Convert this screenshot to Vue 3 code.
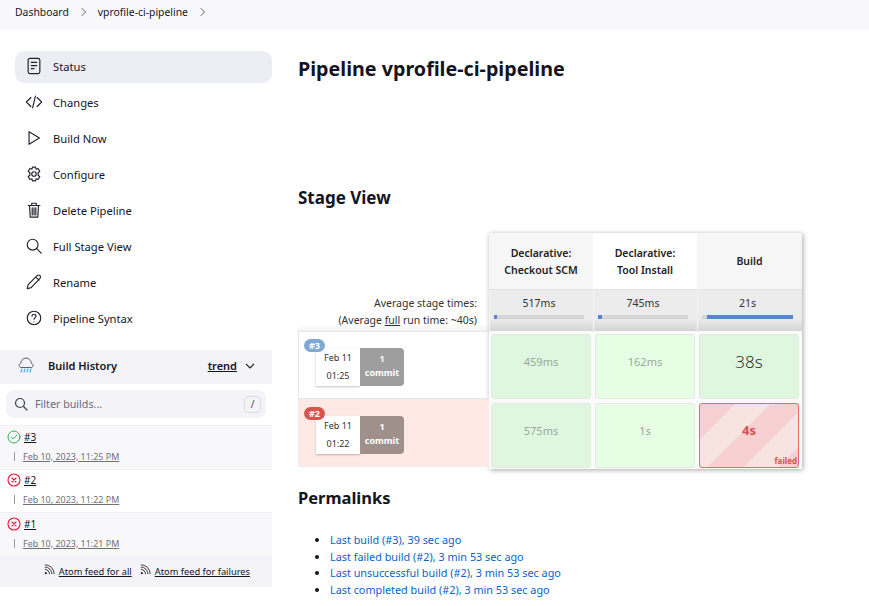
<script setup>
const navItems = [
  { label: 'Status', icon: 'status', active: true },
  { label: 'Changes', icon: 'changes' },
  { label: 'Build Now', icon: 'play' },
  { label: 'Configure', icon: 'gear' },
  { label: 'Delete Pipeline', icon: 'trash' },
  { label: 'Full Stage View', icon: 'search' },
  { label: 'Rename', icon: 'pencil' },
  { label: 'Pipeline Syntax', icon: 'help' }
]

const builds = [
  { id: '#3', date: 'Feb 10, 2023, 11:25 PM', ok: true },
  { id: '#2', date: 'Feb 10, 2023, 11:22 PM', ok: false },
  { id: '#1', date: 'Feb 10, 2023, 11:21 PM', ok: false }
]

const stages = [
  { name: ['Declarative:', 'Checkout SCM'], avg: '517ms', from: 0, width: 3 },
  { name: ['Declarative:', 'Tool Install'], avg: '745ms', from: 0, width: 4, light: true },
  { name: ['Build'], avg: '21s', from: 6, width: 94 }
]

const rows = [
  {
    id: '#3', date: 'Feb 11', time: '01:25', failed: false,
    cells: [
      { text: '459ms', cls: 'ok' },
      { text: '162ms', cls: 'ok light' },
      { text: '38s', cls: 'ok big' }
    ]
  },
  {
    id: '#2', date: 'Feb 11', time: '01:22', failed: true,
    cells: [
      { text: '575ms', cls: 'ok' },
      { text: '1s', cls: 'ok light' },
      { text: '4s', cls: 'fail', note: 'failed' }
    ]
  }
]

const permalinks = [
  'Last build (#3), 39 sec ago',
  'Last failed build (#2), 3 min 53 sec ago',
  'Last unsuccessful build (#2), 3 min 53 sec ago',
  'Last completed build (#2), 3 min 53 sec ago'
]
</script>

<template>
  <div class="page">
    <header class="crumbs">
      <span>Dashboard</span>
      <i class="chev"></i>
      <span>vprofile-ci-pipeline</span>
      <i class="chev"></i>
    </header>

    <div class="layout">
      <aside class="side">
        <nav class="nav">
          <div v-for="item in navItems" :key="item.label" class="nav-item" :class="{ active: item.active }">
            <svg class="nav-icon" viewBox="0 0 20 20" fill="none" stroke="#1f2330" stroke-width="1.3" stroke-linecap="round" stroke-linejoin="round">
              <template v-if="item.icon === 'status'">
                <rect x="3.500" y="1.500" width="13" height="17" rx="2" />
                <path d="M7 6h6M7 9.500h6M7 13h3" />
              </template>
              <path v-else-if="item.icon === 'changes'" d="M6.5 5 1.5 10l5 5M13.500 5l5 5-5 5M11.500 3.500l-3 13" />
              <path v-else-if="item.icon === 'play'" d="M4.500 3v14L16 10z" />
              <template v-else-if="item.icon === 'gear'">
                <circle cx="10" cy="10" r="2.500" />
                <path d="M8.300 2.300h3.400l.6 2.400 2.300-.8 1.800 3-1.800 1.700v2.800l1.800 1.700-1.800 3-2.300-.8-.6 2.400H8.300l-.6-2.400-2.300.8-1.800-3 1.800-1.700V8.600L3.600 6.900l1.800-3 2.300.8z" />
              </template>
              <path v-else-if="item.icon === 'trash'" d="M3.500 5h13M7.500 5V2.500h5V5M5 5l.8 13h8.400L15 5M8 7.500V15.500M10 7.500V15.500M12 7.500V15.500" />
              <template v-else-if="item.icon === 'search'">
                <circle cx="8.500" cy="8.500" r="6" />
                <path d="m13 13 5 5" />
              </template>
              <path v-else-if="item.icon === 'pencil'" d="m2.500 17.500 1-4.500L13.500 3c1-1 2.300-1 3.200 0 .8.900.8 2.200-.2 3.200L6.800 16.300zM12 4.500l3.500 3.500" />
              <template v-else>
                <circle cx="10" cy="10" r="7.500" />
                <path d="M7.800 8c0-1.300 1-2.200 2.200-2.200s2.200.9 2.200 2c0 1.700-2.200 1.800-2.200 3.600M10 14.200v.1" />
              </template>
            </svg>
            <span>{{ item.label }}</span>
          </div>
        </nav>

        <div class="history-head">
          <svg class="cloud" viewBox="0 0 20 20" fill="none" stroke-linecap="round">
            <path d="M5 12.500h10c2.500 0 2.800-3.500.5-4C15 5.500 13 3 10 3S5.200 5.500 4.700 8.500c-2.400.5-2 4 .3 4z" stroke="#5b6475" stroke-width="1" />
            <path d="m6 14-1 3M9 14l-1 3M12 14l-1 3M15 14l-1 3" stroke="#3fa7ea" stroke-width="1.100" />
          </svg>
          <b>Build History</b>
          <span class="trend">trend</span>
          <svg class="caret" viewBox="0 0 10 6" fill="none" stroke="#1f2330" stroke-width="1.100"><path d="m1 1 4 4 4-4" /></svg>
        </div>

        <div class="filter">
          <svg class="filter-icon" viewBox="0 0 14 14" fill="none" stroke="#3d4254" stroke-width="1.200" stroke-linecap="round"><circle cx="6" cy="6" r="4.500" /><path d="m9.500 9.500 3.500 3.500" /></svg>
          <span class="filter-text">Filter builds...</span>
          <kbd class="slash">/</kbd>
        </div>

        <div class="builds">
          <div v-for="b in builds" :key="b.id" class="build">
            <div class="build-top">
              <svg v-if="b.ok" class="state" viewBox="0 0 14 14" fill="none" stroke="#2fb35a" stroke-width="1" stroke-linecap="round"><circle cx="7" cy="7" r="6" /><path d="m4.500 7.200 1.800 1.800 3.300-3.600" /></svg>
              <svg v-else class="state" viewBox="0 0 14 14" fill="none" stroke="#e6143c" stroke-width="1.100" stroke-linecap="round"><circle cx="7" cy="7" r="6" /><path d="m5 5 4 4M9 5 5 9" /></svg>
              <a class="build-id">{{ b.id }}</a>
            </div>
            <div class="build-date"><i class="tick"></i><a>{{ b.date }}</a></div>
          </div>
        </div>

        <div class="feeds">
          <svg class="rss" viewBox="0 0 12 12" fill="none" stroke="#1f2330" stroke-width="1"><circle cx="2" cy="10" r="1.200" fill="#1f2330" stroke="none" /><path d="M1 6c2.800 0 5 2.200 5 5M1 3.500c4.300 0 7.500 3.200 7.500 7.500M1 1c5.700 0 10 4.300 10 10" /></svg>
          <a>Atom feed for all</a>
          <svg class="rss second" viewBox="0 0 12 12" fill="none" stroke="#1f2330" stroke-width="1"><circle cx="2" cy="10" r="1.200" fill="#1f2330" stroke="none" /><path d="M1 6c2.800 0 5 2.200 5 5M1 3.500c4.300 0 7.500 3.200 7.500 7.500M1 1c5.700 0 10 4.300 10 10" /></svg>
          <a>Atom feed for failures</a>
        </div>
      </aside>

      <main class="main">
        <h1>Pipeline vprofile-ci-pipeline</h1>
        <h2 class="stage-title">Stage View</h2>

        <div class="stage-view">
          <div class="labels">
            <div class="avg-label">
              <div>Average stage times:</div>
              <div>(Average <u>full</u> run time: ~40s)</div>
            </div>
            <div v-for="row in rows" :key="row.id" class="run" :class="{ failed: row.failed }">
              <span class="badge">{{ row.id }}</span>
              <div class="when">
                <div>{{ row.date }}</div>
                <div>{{ row.time }}</div>
              </div>
              <div class="commit"><b>1</b><b>commit</b></div>
            </div>
          </div>

          <div class="matrix">
            <div v-for="s in stages" :key="s.avg" class="head" :class="{ white: s.light }">
              <div v-for="line in s.name" :key="line">{{ line }}</div>
            </div>
            <div v-for="s in stages" :key="s.avg + 'a'" class="avg">
              <div>{{ s.avg }}</div>
              <div class="bar">
                <span :style="{ marginLeft: s.from + '%', width: s.width + '%' }"></span>
              </div>
            </div>
            <template v-for="row in rows" :key="row.id">
              <div v-for="c in row.cells" :key="c.text" class="slot">
                <div class="cell" :class="c.cls">
                  {{ c.text }}
                  <span v-if="c.note" class="note">{{ c.note }}</span>
                </div>
              </div>
            </template>
          </div>
        </div>

        <h2 class="perma-title">Permalinks</h2>
        <ul class="perma">
          <li v-for="p in permalinks" :key="p"><a>{{ p }}</a></li>
        </ul>
      </main>
    </div>
  </div>
</template>

<style>
html, body {
  margin: 0;
  background: #fff;
}
</style>

<style scoped>
.page {
  width: 869px;
  height: 606px;
  overflow: hidden;
  font-family: "Noto Sans", "Open Sans", sans-serif;
  color: #14141f;
  font-size: 12px;
}

.crumbs {
  height: 30px;
  padding: 0 0 6px 15px;
  box-sizing: border-box;
  background: #f8f8fa;
  display: flex;
  align-items: center;
  font-size: 10.400px;
}
.chev {
  width: 5px;
  height: 5px;
  border-top: 1px solid #8f909a;
  border-right: 1px solid #8f909a;
  transform: rotate(45deg);
  margin: 0 13px 0 10px;
}

.layout {
  display: flex;
}
.side {
  width: 272px;
  flex: none;
  padding-top: 21px;
}
.nav {
  padding-left: 15px;
}
.nav-item {
  height: 32px;
  box-sizing: border-box;
  padding: 0 0 2px 10px;
  margin-bottom: 4px;
  border-radius: 9px;
  display: flex;
  align-items: center;
  gap: 10px;
  font-size: 11.200px;
}
.nav-item.active {
  background: #edeef4;
}
.nav-icon {
  width: 18px;
  height: 18px;
  flex: none;
}

.history-head {
  margin-top: 15px;
  height: 34px;
  box-sizing: border-box;
  padding: 0 0 4px 16px;
  background: #f3f3f8;
  display: flex;
  align-items: center;
  font-size: 11px;
}
.cloud {
  width: 20px;
  height: 20px;
  margin-right: 12px;
}
.history-head b {
  font-weight: 600;
}
.trend {
  margin-left: auto;
  font-weight: 600;
  text-decoration: underline;
}
.caret {
  width: 10px;
  height: 6px;
  margin: 2px 17px 0 8px;
}

.filter {
  margin: 6px 6px 0;
  height: 28px;
  border-radius: 8px;
  background: #f3f3f8;
  display: flex;
  align-items: center;
  padding-left: 8px;
}
.filter-icon {
  width: 14px;
  height: 14px;
  margin-right: 7px;
}
.filter-text {
  color: #6a6c85;
  font-size: 10.700px;
}
.slash {
  margin-left: auto;
  margin-right: 5px;
  width: 17px;
  height: 17px;
  box-sizing: border-box;
  border: 1px solid #dcdce6;
  border-radius: 4px;
  text-align: center;
  line-height: 15px;
  font-family: inherit;
  font-size: 10px;
  color: #4a4c60;
}

.builds {
  margin-top: 7px;
}
.build {
  height: 43.500px;
  padding-left: 7px;
  box-sizing: border-box;
  border-top: 1px solid #f1f1f5;
}
.build:nth-child(odd) {
  background: #f8f8fa;
}
.build-top {
  display: flex;
  align-items: center;
  height: 21px;
  gap: 3px;
  font-size: 10px;
}
.state {
  width: 14px;
  height: 14px;
}
.build-id {
  text-decoration: underline;
  color: #14141f;
}
.build-date {
  display: flex;
  align-items: center;
  font-size: 8.950px;
  color: #6f7177;
  height: 18px;
  padding-left: 7px;
}
.build-date a {
  text-decoration: underline;
}
.tick {
  width: 1px;
  height: 9px;
  background: #8c98a4;
  margin-right: 8px;
}

.feeds {
  height: 31px;
  background: #f3f3f8;
  display: flex;
  align-items: center;
  justify-content: flex-end;
  padding-right: 22px;
  font-size: 9.300px;
}
.feeds a {
  text-decoration: underline;
  white-space: nowrap;
}
.rss {
  width: 11px;
  height: 11px;
  margin: 0 4px 4px 0;
}
.rss.second {
  margin-left: 8px;
}

.main {
  padding-left: 26px;
  flex: 1;
}
h1,
h2 {
  margin: 0;
  font-weight: 700;
}
h1 {
  font-size: 19.700px;
  line-height: 26px;
  margin-top: 26px;
}
.stage-title,
.perma-title {
  font-size: 16.500px;
  line-height: 24px;
}
.stage-title {
  font-size: 17px;
  margin-top: 104px;
}

.stage-view {
  display: flex;
  align-items: flex-start;
  margin-top: 23px;
}
.labels {
  width: 191px;
  flex: none;
  padding-top: 57px;
}
.avg-label {
  height: 41px;
  box-sizing: border-box;
  padding: 5px 12px 0 0;
  text-align: right;
  font-size: 10.500px;
  line-height: 17px;
  color: #333;
  background: linear-gradient(#fff 85%, #f2f2f2);
}
.run {
  position: relative;
  height: 68px;
  box-sizing: border-box;
  border: 1px solid #e6e6e6;
  border-right: 0;
  display: flex;
  padding: 16px 0 0 17px;
}
.run.failed {
  background: #ffe9e5;
  border-color: #eee;
}
.badge {
  position: absolute;
  left: 5px;
  top: 7px;
  height: 13px;
  padding: 0 5px;
  border-radius: 7px;
  background: #80a8d4;
  color: #fff;
  font-size: 9px;
  font-weight: 700;
  line-height: 13px;
}
.failed .badge {
  background: #d9534f;
}
.when {
  width: 44px;
  height: 38px;
  box-sizing: border-box;
  padding-top: 1px;
  background: #fff;
  box-shadow: 0 1px 2px rgba(0, 0, 0, 0.25);
  text-align: center;
  font-size: 9px;
  line-height: 18px;
  color: #333;
}
.commit {
  width: 44px;
  height: 38px;
  box-sizing: border-box;
  padding-bottom: 2px;
  background: #9e9e9e;
  border-radius: 0 4px 4px 0;
  color: #fff;
  display: flex;
  flex-direction: column;
  align-items: center;
  justify-content: center;
  font-size: 9px;
  line-height: 14px;
}
.failed .commit {
  background: #a0908c;
}

.matrix {
  display: grid;
  grid-template-columns: 104px 104px 105px;
  grid-template-rows: 57px 41px 69px 69px;
  box-shadow: 1px 1px 5px rgba(0, 0, 0, 0.35);
}
.head {
  background: #f6f6f6;
  display: flex;
  flex-direction: column;
  align-items: center;
  justify-content: center;
  padding-top: 1px;
  border-bottom: 1px solid #e4e4e4;
  font-size: 10.500px;
  font-weight: 600;
  line-height: 17px;
  color: #222;
}
.head.white {
  background: #fff;
}
.avg {
  background: linear-gradient(#ececec 70%, #d4d4d4);
  padding: 6px 9px 0 4px;
  text-align: center;
  font-size: 10.500px;
  line-height: 14px;
  color: #333;
  border-left: 1px solid #f5f5f5;
}
.bar {
  height: 3px;
  margin-top: 5px;
  background: #d6d6d6;
  border: 1px solid #cfcfcf;
  border-width: 0 0 1px;
  display: flex;
}
.bar span {
  background: #5586d0;
  min-width: 3px;
  height: 4px;
}
.slot {
  padding: 3px 2px 1px;
  background: #fbfbfb;
  display: flex;
}
.slot:nth-child(3n) {
  padding-right: 3px;
}
.cell {
  position: relative;
  flex: 1;
  box-sizing: border-box;
  border: 1px solid #e3e9e1;
  border-radius: 3px;
  background: #dff7de;
  display: flex;
  align-items: center;
  justify-content: center;
  padding-bottom: 11px;
  font-size: 11px;
  color: #9aa69a;
}
.cell.light {
  background: #e6ffe4;
}
.cell.big {
  font-size: 17px;
  font-weight: 300;
  color: #333;
}
.cell.fail {
  border: 1px solid #e66a6a;
  background: repeating-linear-gradient(135deg, #f7d0d2 0 25px, #f7e3df 25px 50px);
  color: #dc4f4f;
  font-size: 13px;
  font-weight: 700;
}
.note {
  position: absolute;
  right: 1px;
  bottom: 1px;
  font-size: 8px;
  line-height: 10px;
  color: #dc4f4f;
}

.perma-title {
  margin-top: 17px;
}
.perma {
  margin: 22px 0 0;
  padding-left: 32px;
  font-size: 10.830px;
  line-height: 16.700px;
}
.perma a {
  color: #0b62c9;
}
</style>
